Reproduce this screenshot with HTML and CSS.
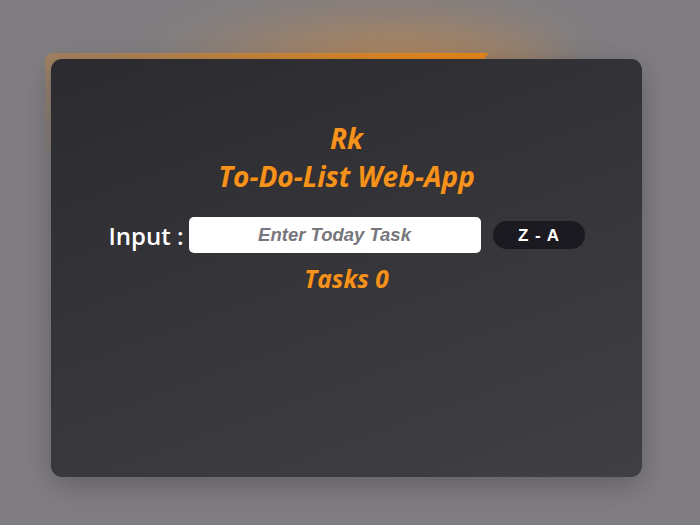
FILE: index.html
```html
<!DOCTYPE html>
<html lang="en">
<head>
<meta charset="utf-8">
<title>To-Do-List Web-App</title>
<link rel="stylesheet" href="styles.css">
</head>
<body>
  <main class="stage">
    <div class="halo"></div>
    <div class="glow"></div>
    <section class="card">
      <h1 class="title">Rk<br>To-Do-List Web-App</h1>
      <div class="input-row">
        <label class="label" for="task">Input :</label>
        <input class="task-input" id="task" type="text" placeholder="Enter Today Task">
        <button class="sort-btn" type="button">Z - A</button>
      </div>
      <h2 class="count">Tasks 0</h2>
    </section>
  </main>
</body>
</html>
```
FILE: styles.css
```css
html, body {
  margin: 0;
  padding: 0;
}
body {
  background: #807e82;
  width: 700px;
  height: 525px;
  overflow: hidden;
  font-family: "Open Sans", "Noto Sans", sans-serif;
}
.stage {
  position: relative;
  padding: 59px 0 0 51px;
}
.halo {
  position: absolute;
  left: 150px;
  top: 0;
  width: 420px;
  height: 120px;
  border-radius: 50%;
  background: radial-gradient(ellipse at 58% 55%, rgba(220,140,50,0.6) 0%, rgba(200,135,70,0.3) 45%, rgba(200,135,70,0) 75%);
  filter: blur(20px);
}
.glow {
  position: absolute;
  left: 45px;
  top: 53px;
  width: 444px;
  height: 110px;
  background: linear-gradient(90deg, rgba(225,140,45,0.35) 0%, rgba(228,138,35,0.7) 55%, #e8891d 90%);
  clip-path: polygon(0 0, 100% 0, 98.6% 7px, 0 100%);
  -webkit-mask-image: linear-gradient(180deg, #000 0, #000 8px, rgba(0,0,0,0.7) 20px, transparent 100%);
  mask-image: linear-gradient(180deg, #000 0, #000 8px, rgba(0,0,0,0.7) 20px, transparent 100%);
  border-radius: 8px 0 0 0;
}
.card {
  position: relative;
  width: 591px;
  height: 418px;
  box-sizing: border-box;
  border-radius: 11px;
  background: linear-gradient(160deg, #2b2a2f 0%, #36353a 50%, #403f45 100%);
  box-shadow: 0 8px 30px rgba(0,0,0,0.25);
  padding-top: 60px;
  display: flex;
  flex-direction: column;
  align-items: center;
}
.title {
  margin: 0;
  font-size: 28px;
  line-height: 38px;
  font-weight: 700;
  font-style: italic;
  color: #f6921e;
  text-align: center;
  text-shadow: 0 0 1px #5a3200;
}
.input-row {
  display: flex;
  align-items: center;
  margin-top: 22px;
}
.label {
  color: #ffffff;
  font-size: 24px;
  font-weight: 600;
  margin-right: 5px;
}
.task-input {
  width: 292px;
  height: 36px;
  box-sizing: border-box;
  border: none;
  border-radius: 5px;
  background: #ffffff;
  text-align: center;
  font-family: "Liberation Sans", Arial, sans-serif;
  font-size: 18.5px;
  font-weight: 700;
  font-style: italic;
  outline: none;
}
.task-input::placeholder {
  color: #77767c;
}
.sort-btn {
  margin-left: 12px;
  width: 92px;
  height: 28px;
  border: none;
  border-radius: 14px;
  background: #1b1a20;
  color: #ffffff;
  font-family: "Liberation Sans", Arial, sans-serif;
  font-size: 17px;
  font-weight: 700;
  word-spacing: 2px;
  padding: 2px 0 0;
}
.count {
  margin: 10px 0 0;
  font-size: 24.5px;
  line-height: 32px;
  font-weight: 700;
  font-style: italic;
  color: #f6921e;
  text-shadow: 0 0 1px #5a3200;
}
```
